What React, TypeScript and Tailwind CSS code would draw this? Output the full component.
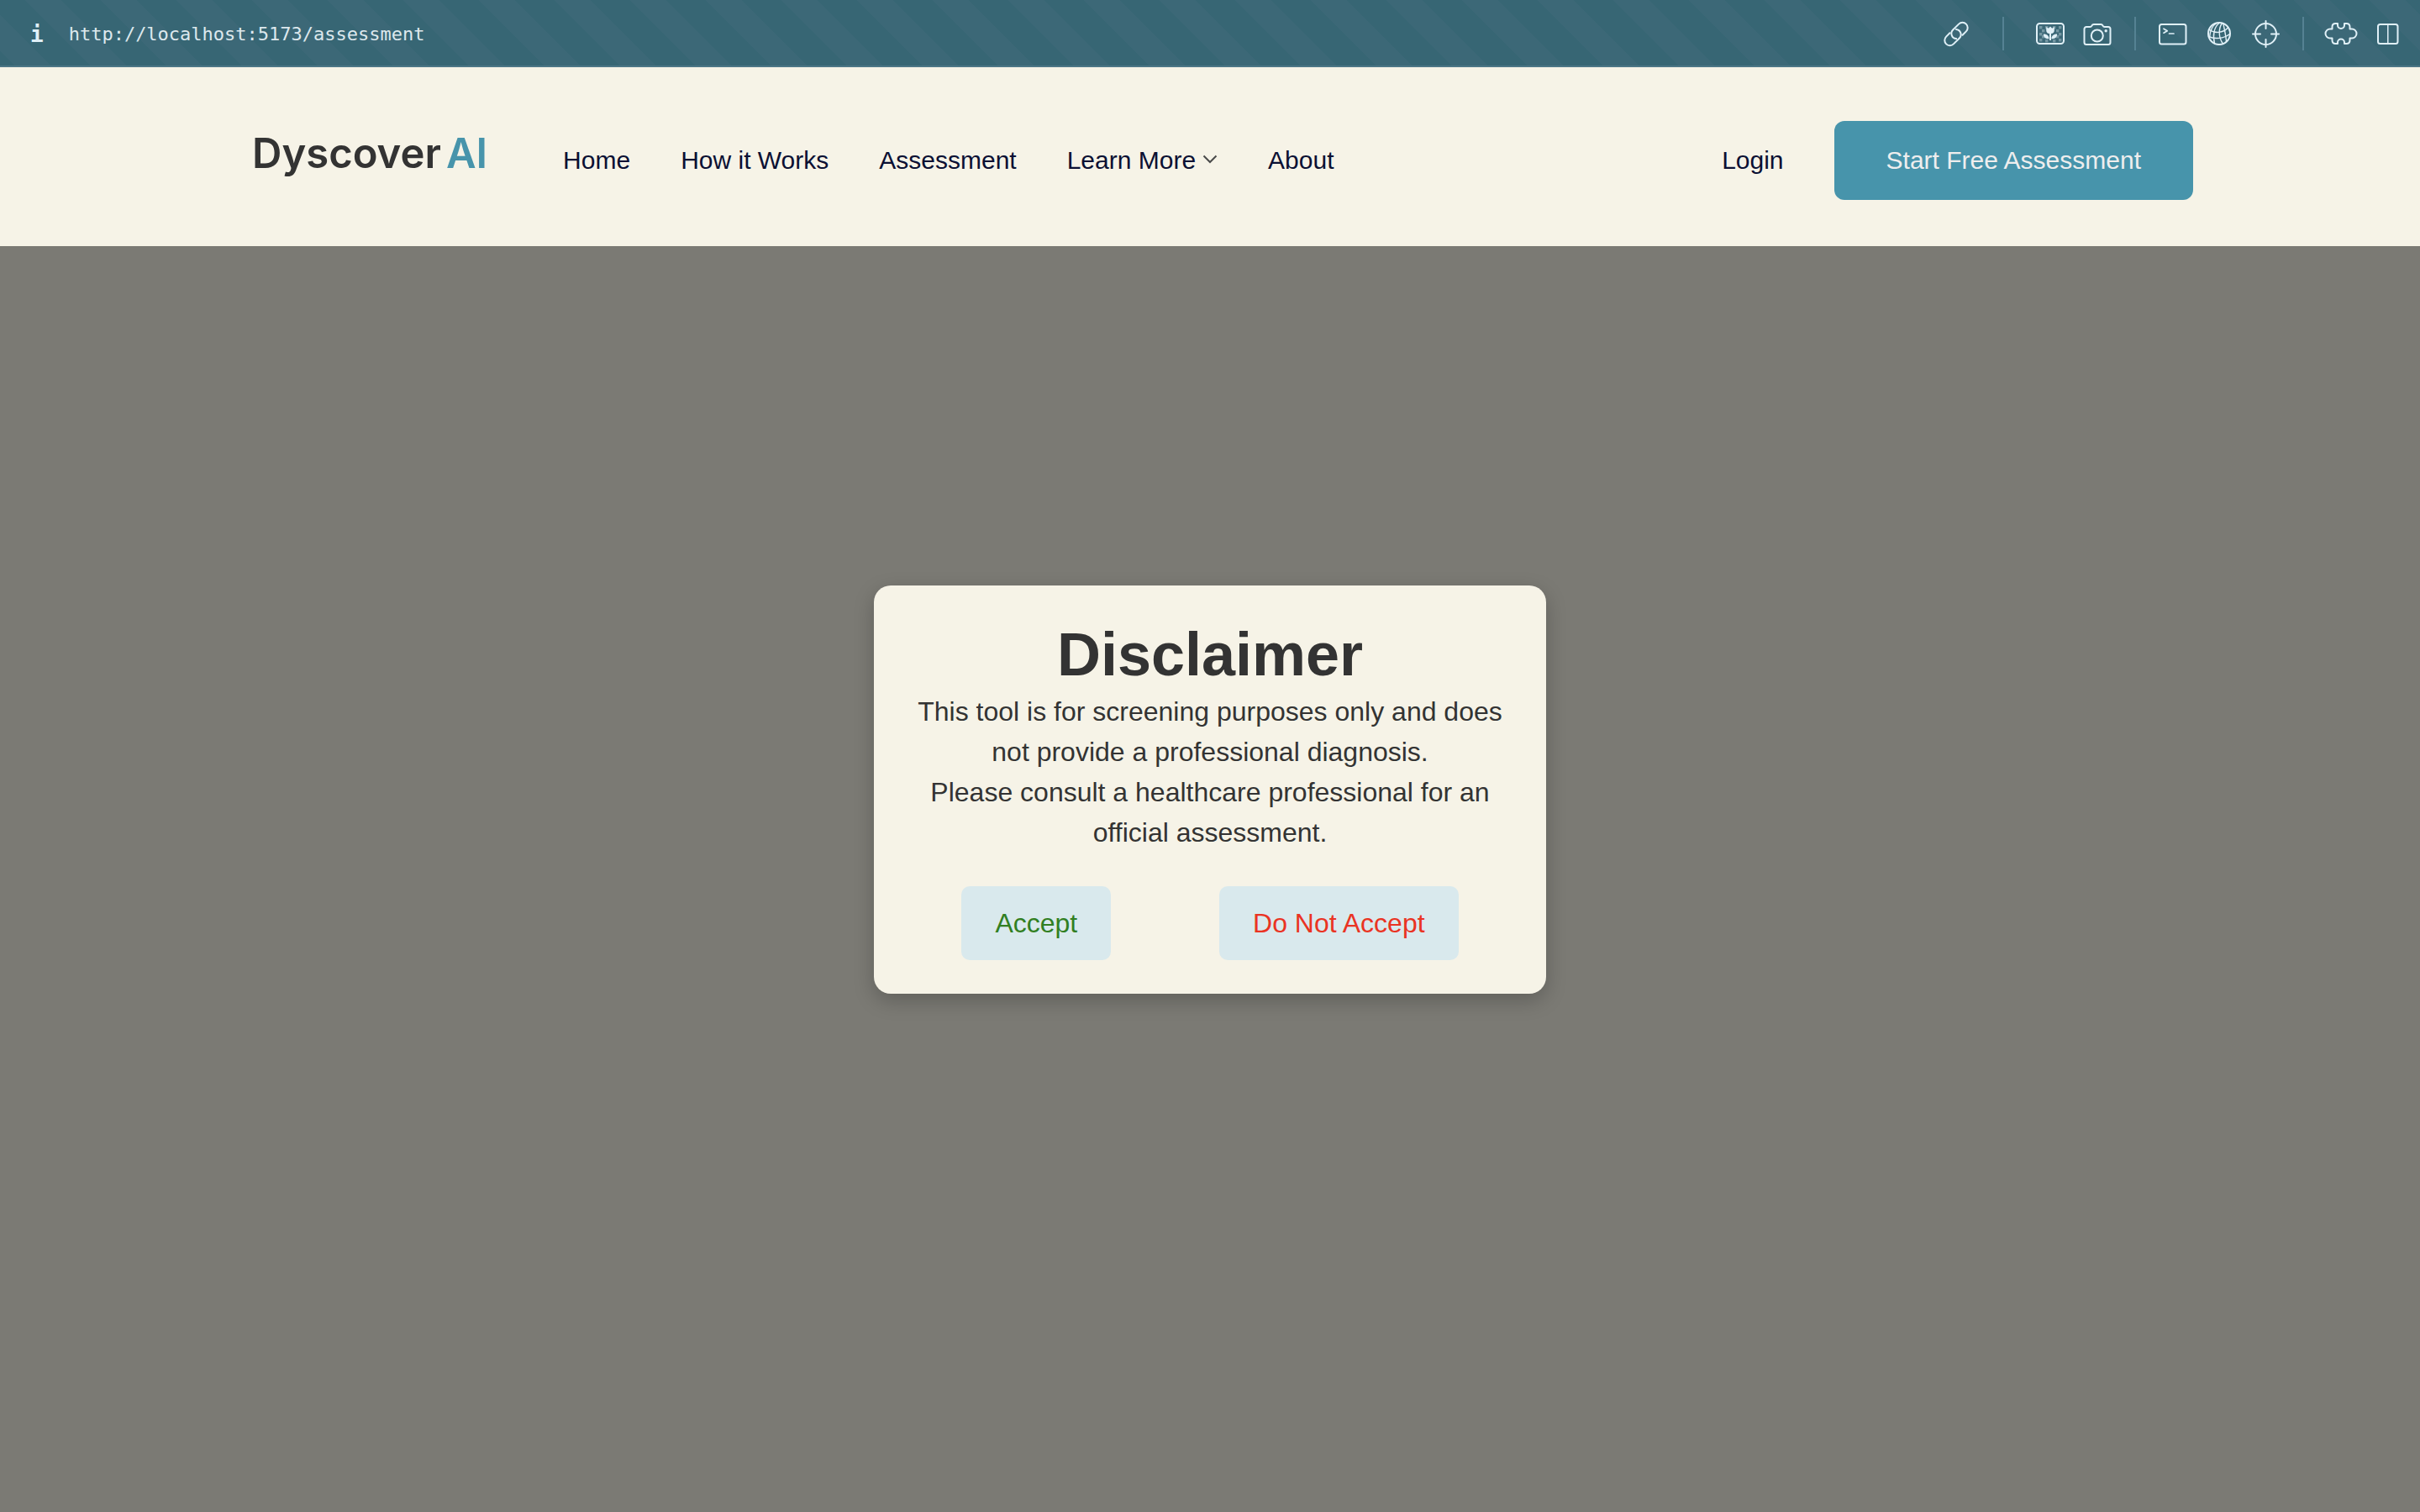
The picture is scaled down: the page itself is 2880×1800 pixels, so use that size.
import type { ReactNode } from "react";

function ToolButton({ label, children }: { label: string; children: ReactNode }) {
  return (
    <button type="button" aria-label={label} className="size-10 shrink-0">
      <svg
        viewBox="0 0 40 40"
        className="size-10"
        fill="none"
        stroke="currentColor"
        strokeWidth="2"
        strokeLinecap="round"
        strokeLinejoin="round"
      >
        {children}
      </svg>
    </button>
  );
}

const chainHalf = "M4.500 6.200H10.600A6.200 6.200 0 0 0 10.600 -6.200H.8A6.200 6.200 0 0 0 -3.900 4.040";

const checks = [
  [7, 11], [14, 11], [23, 11], [30, 11],
  [10, 15], [27, 15],
  [7, 19], [30, 19],
  [10, 22], [27, 22],
  [7, 26], [14, 27], [23, 27], [30, 26],
];

function TopBar() {
  return (
    <div className="flex h-20 shrink-0 items-center bg-[#376674] bg-[linear-gradient(45deg,transparent_11%,#3c6877_11%,#3c6877_35%,transparent_35%,transparent_61%,#3c6877_61%,#3c6877_85%,transparent_85%)] bg-[size:90px_90px] bg-[position:left_bottom] pr-[18px] pl-9 text-[#e0f0f7] shadow-[inset_0_-2px_0_#4c7686]">
      <button
        type="button"
        aria-label="Site information"
        className="pt-0.5 font-['DejaVu_Sans_Mono',monospace] text-[26px] leading-10 font-bold"
      >
        i
      </button>
      <input
        type="text"
        aria-label="Address"
        readOnly
        value="http://localhost:5173/assessment"
        className="ml-[30px] min-w-0 flex-1 bg-transparent pt-0.5 font-['DejaVu_Sans_Mono',monospace] text-[22px] leading-10 text-[#dde8ed] outline-none"
      />
      <div className="flex items-center">
        <ToolButton label="Copy link">
          <g transform="translate(20 20.500) rotate(-45)">
            <path d={chainHalf} />
            <path d={chainHalf} transform="rotate(180)" />
          </g>
        </ToolButton>
        <span className="mx-[35px] h-10 w-0.5 bg-[#558293]" />
        <div className="flex gap-4">
          <ToolButton label="Capture element">
            <rect x="4" y="8" width="32" height="24" rx="3.5" />
            <g stroke="none" fill="currentColor">
              {checks.map(([x, y]) => (
                <rect key={`${x}-${y}`} x={x} y={y} width="3.4" height="3.4" opacity="0.35" />
              ))}
              <path d="M15.2 12l2.600 1.800L20 11.600l2.200 2.200 2.600-1.800v4.200c0 2.200-1.600 3.600-3.800 3.900V28h-2v-7.900c-2.200-.3-3.800-1.700-3.800-3.900z" />
              <path d="M11.800 20.600c3.800 0 6.400 1.600 6.800 5.400-3.800.8-6.600-1.200-6.800-5.400zM28.200 20.600c-3.800 0-6.400 1.600-6.800 5.400 3.800.8 6.600-1.200 6.800-5.400z" />
            </g>
          </ToolButton>
          <ToolButton label="Take screenshot">
            <path d="M7 12h4.500c1 0 1.500-.6 2-1.500.5-1 1-1.500 2.200-1.500h8.600c1.200 0 1.700.5 2.200 1.500.5.900 1 1.500 2 1.500H33a2.500 2.500 0 0 1 2.500 2.500v16A2.500 2.500 0 0 1 33 33H7a2.500 2.500 0 0 1-2.500-2.500v-16A2.500 2.500 0 0 1 7 12z" />
            <circle cx="19.800" cy="22.500" r="7" />
            <circle cx="30.200" cy="16.700" r="1.700" fill="currentColor" stroke="none" />
          </ToolButton>
        </div>
        <span className="mx-6 h-10 w-0.5 bg-[#558293]" />
        <div className="flex gap-[15px]">
          <ToolButton label="Console">
            <rect x="4" y="9" width="31.500" height="23.500" rx="2.500" />
            <path d="M9 14.200l4.200 2.500-4.200 2.500M15.500 20h5.500" strokeWidth="1.700" />
          </ToolButton>
          <ToolButton label="Network">
            <circle cx="20" cy="20" r="13" />
            <g strokeWidth="1.400">
              <path d="M20 7.500C14 12 12 22 14.500 31.500" />
              <path d="M23.500 7.500C19 14 19 25 24.500 32" />
              <path d="M25 8.500c1 6 3 13 3.500 21" />
              <path d="M17 7.500C11 11 9 18 8.500 25" />
              <path d="M8.500 15.500c6 4.500 16 4 22-2.500" />
              <path d="M7.500 23.500c7 3.500 18 2.500 25-3" />
            </g>
          </ToolButton>
          <ToolButton label="Inspect element">
            <circle cx="20.500" cy="20.500" r="12.500" />
            <path d="M20.500 5v9M20.500 27v9M5 20.500h9M27 20.500h9" />
          </ToolButton>
        </div>
        <span className="mx-6 h-10 w-0.5 bg-[#558293]" />
        <div className="flex gap-4">
          <ToolButton label="Extensions">
            <path d="M16 8h-2.500Q9.500 8 9.500 12v2.500H7a5.500 5.500 0 0 0 0 11h2.500V28q0 4 4 4H16v-1.500a4 4 0 0 1 8 0V32h2.500q4 0 4-4v-2.500H33a5.500 5.500 0 0 0 0-11h-2.500V12q0-4-4-4H24v2a4 4 0 0 1-8 0z" />
          </ToolButton>
          <ToolButton label="Split view">
            <rect x="8" y="9" width="23.500" height="23" rx="2.500" />
            <path d="M19.800 9v23" strokeWidth="1.500" />
          </ToolButton>
        </div>
      </div>
    </div>
  );
}

function Header() {
  return (
    <header className="relative z-10 bg-[#f6f3e7]">
      <div className="mx-auto flex max-w-[2340px] items-center pt-16 pb-[55px] pl-[30px] text-[30px] leading-[34px] text-[#0b1033]">
        <a
          href="#home"
          className="flex gap-1.5 pb-4 font-['Inter',sans-serif] text-[49px] leading-[48px] font-semibold text-[#333333]"
        >
          <span>Dyscover</span>
          <span className="text-[#4794ab]">AI</span>
        </a>
        <nav className="ml-[90px] flex gap-[60px]">
          <a href="#home">Home</a>
          <a href="#how">How it Works</a>
          <a href="#assessment">Assessment</a>
          <button type="button" className="flex items-center gap-2">
            Learn More
            <svg viewBox="0 0 18 18" className="size-[18px]" fill="none" stroke="#4a4a4a" strokeWidth="2">
              <path d="M1.500 3.500l7.500 7.500 7.500-7.500" />
            </svg>
          </button>
          <a href="#about">About</a>
        </nav>
        <a href="#login" className="ml-auto">
          Login
        </a>
        <button
          type="button"
          className="ml-[60px] rounded-xl bg-[#4794ab] px-[62px] py-[30px] text-[#eeeeee]"
        >
          Start Free Assessment
        </button>
      </div>
    </header>
  );
}

function Disclaimer() {
  return (
    <div className="absolute inset-0 flex items-center justify-center bg-[#7b7a74]">
      <section
        role="dialog"
        aria-labelledby="disclaimer-title"
        className="w-[800px] max-w-full rounded-[20px] bg-[#f6f3e7] p-10 text-center text-[32px] leading-[48px] text-[#333333] shadow-[0_8px_24px_rgba(0,0,0,0.22)]"
      >
        <h1 id="disclaimer-title" className="pb-0.5 text-7xl leading-[84px] font-bold">
          Disclaimer
        </h1>
        <p>This tool is for screening purposes only and does not provide a professional diagnosis.</p>
        <p>Please consult a healthcare professional for an official assessment.</p>
        <div className="mt-10 flex justify-around">
          <button type="button" className="rounded-[10px] bg-[#d9e9ed] px-10 py-5 text-[#317f22]">
            Accept
          </button>
          <button type="button" className="rounded-[10px] bg-[#d9e9ed] px-10 py-5 text-[#ea3323]">
            Do Not Accept
          </button>
        </div>
      </section>
    </div>
  );
}

export default function App() {
  return (
    <div className="flex min-h-screen flex-col font-['Liberation_Sans',Arial,sans-serif]">
      <TopBar />
      <div className="relative flex-1">
        <Header />
        <Disclaimer />
      </div>
    </div>
  );
}
